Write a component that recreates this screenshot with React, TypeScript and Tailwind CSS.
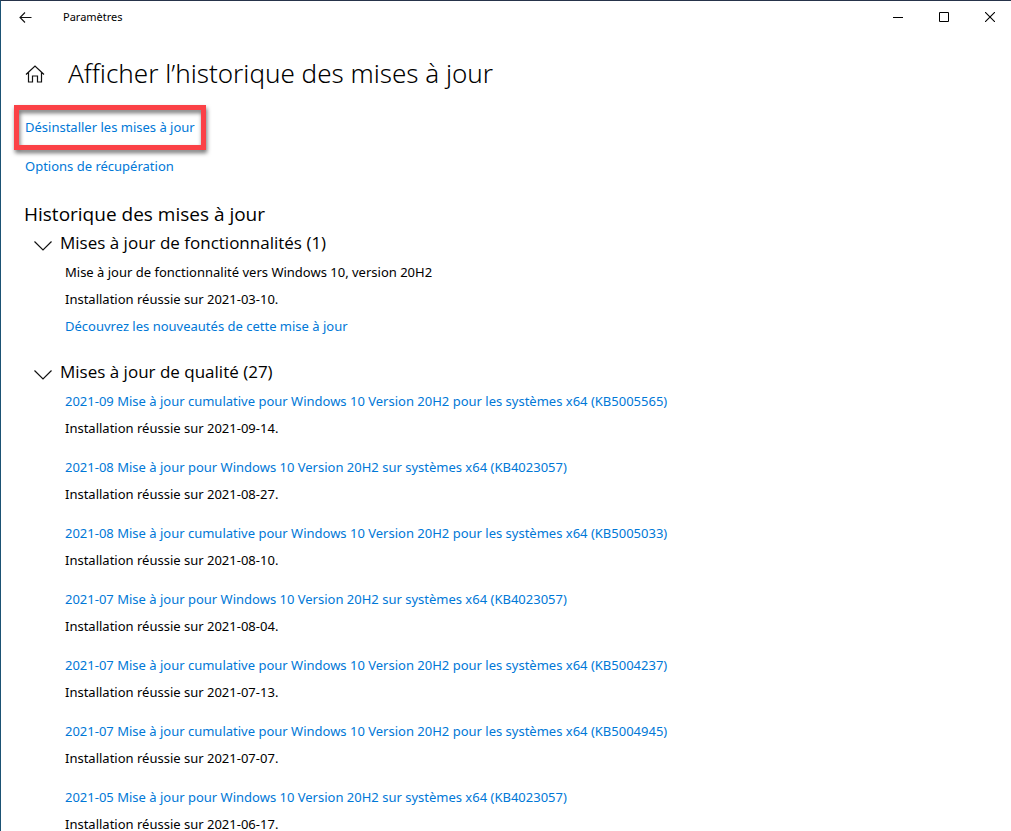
import { useState } from "react";

const featureUpdates = [
  {
    title: "Mise à jour de fonctionnalité vers Windows 10, version 20H2",
    status: "Installation réussie sur 2021-03-10.",
    more: "Découvrez les nouveautés de cette mise à jour",
  },
];

const qualityUpdates = [
  { title: "2021-09 Mise à jour cumulative pour Windows 10 Version 20H2 pour les systèmes x64 (KB5005565)", date: "2021-09-14" },
  { title: "2021-08 Mise à jour pour Windows 10 Version 20H2 sur systèmes x64 (KB4023057)", date: "2021-08-27" },
  { title: "2021-08 Mise à jour cumulative pour Windows 10 Version 20H2 pour les systèmes x64 (KB5005033)", date: "2021-08-10" },
  { title: "2021-07 Mise à jour pour Windows 10 Version 20H2 sur systèmes x64 (KB4023057)", date: "2021-08-04" },
  { title: "2021-07 Mise à jour cumulative pour Windows 10 Version 20H2 pour les systèmes x64 (KB5004237)", date: "2021-07-13" },
  { title: "2021-07 Mise à jour cumulative pour Windows 10 Version 20H2 pour les systèmes x64 (KB5004945)", date: "2021-07-07" },
  { title: "2021-05 Mise à jour pour Windows 10 Version 20H2 sur systèmes x64 (KB4023057)", date: "2021-06-17" },
];

function TitleBar() {
  return (
    <header className="flex h-8 shrink-0 items-center">
      <button aria-label="Retour" className="flex h-8 w-12 items-center justify-center">
        <svg width="13" height="11" viewBox="0 0 13 11" fill="none" stroke="#111" strokeWidth="1.1">
          <path d="M12.5 5.5H1M6 .5l-5 5 5 5" />
        </svg>
      </button>
      <span className="ml-3.5 text-[11px]">Paramètres</span>
      <div className="-mr-0.5 ml-auto flex">
        <button aria-label="Réduire" className="flex h-8 w-[46px] items-center justify-center">
          <svg width="10" height="10" viewBox="0 0 10 10" stroke="#000">
            <path d="M0 5.5h10" />
          </svg>
        </button>
        <button aria-label="Agrandir" className="flex h-8 w-[46px] items-center justify-center">
          <svg width="10" height="10" viewBox="0 0 10 10" fill="none" stroke="#000">
            <path d="M.5.5h9v9h-9z" />
          </svg>
        </button>
        <button aria-label="Fermer" className="flex h-8 w-[46px] items-center justify-center">
          <svg width="10" height="10" viewBox="0 0 10 10" stroke="#000" strokeWidth="1.1">
            <path d="M0 0l10 10M10 0L0 10" />
          </svg>
        </button>
      </div>
    </header>
  );
}

function Section({ title, children }: { title: string; children: React.ReactNode }) {
  const [isOpen, setIsOpen] = useState(true);

  return (
    <section>
      <h3 className="pb-0.5 font-['Open_Sans',sans-serif]">
        <button
          onClick={() => setIsOpen(!isOpen)}
          aria-expanded={isOpen}
          className="flex h-[29px] items-center gap-[7px] pl-[9px] text-[17px]"
        >
          <svg
            width="20"
            height="11"
            viewBox="0 0 20 11"
            fill="none"
            stroke="#111"
            strokeWidth="1.2"
            className={isOpen ? "mt-1.5" : "mt-1.5 -rotate-90"}
          >
            <path d="M1.5 1.5l8.5 8.5 8.5-8.5" />
          </svg>
          {title}
        </button>
      </h3>
      {isOpen && <ul className="pl-[41px]">{children}</ul>}
    </section>
  );
}

export default function App() {
  return (
    <div className="flex h-screen flex-col overflow-hidden border-t border-l border-t-[#26334a] border-l-[#1b5274] bg-white font-['Noto_Sans','Open_Sans',sans-serif] text-[13px] text-black">
      <TitleBar />
      <main className="min-h-0 flex-1 overflow-y-auto px-[23px] [scrollbar-width:none]">
        <div className="flex h-[81px] items-center gap-[23px] pl-px">
          <a href="#accueil" aria-label="Accueil">
            <svg width="20" height="20" viewBox="0 0 20 20" fill="none" stroke="#111" strokeWidth="1.2">
              <path d="M1 10.5l9-8.5 9 8.5M3.5 8.5v9.5h4v-6h5v6h4V8.5" />
            </svg>
          </a>
          <h1 className="text-[26px] font-light">Afficher l’historique des mises à jour</h1>
        </div>
        <nav className="flex flex-col items-start gap-3 pl-px text-[#0078d7]">
          <a href="#desinstaller" className="relative leading-[27px]">
            Désinstaller les mises à jour
            <span className="pointer-events-none absolute -inset-x-[11px] -inset-y-[9px] border-5 border-[#fb4146] drop-shadow-[1px_3px_2px_rgba(0,0,0,0.55)]" />
          </a>
          <a href="#recuperation" className="leading-[27px]">
            Options de récupération
          </a>
        </nav>
        <h2 className="mt-5 font-['Open_Sans',sans-serif] text-[19px] leading-7">Historique des mises à jour</h2>
        <Section title="Mises à jour de fonctionnalités (1)">
          {featureUpdates.map((update) => (
            <li key={update.title} className="mb-[17px] leading-[27px]">
              <p>{update.title}</p>
              <p>{update.status}</p>
              <a href="#nouveautes" className="text-[#0078d7]">
                {update.more}
              </a>
            </li>
          ))}
        </Section>
        <Section title="Mises à jour de qualité (27)">
          {qualityUpdates.map((update) => (
            <li key={update.date} className="mb-3 leading-[27px]">
              <a href="#kb" className="text-[#0078d7]">
                {update.title}
              </a>
              <p>Installation réussie sur {update.date}.</p>
            </li>
          ))}
        </Section>
      </main>
    </div>
  );
}
